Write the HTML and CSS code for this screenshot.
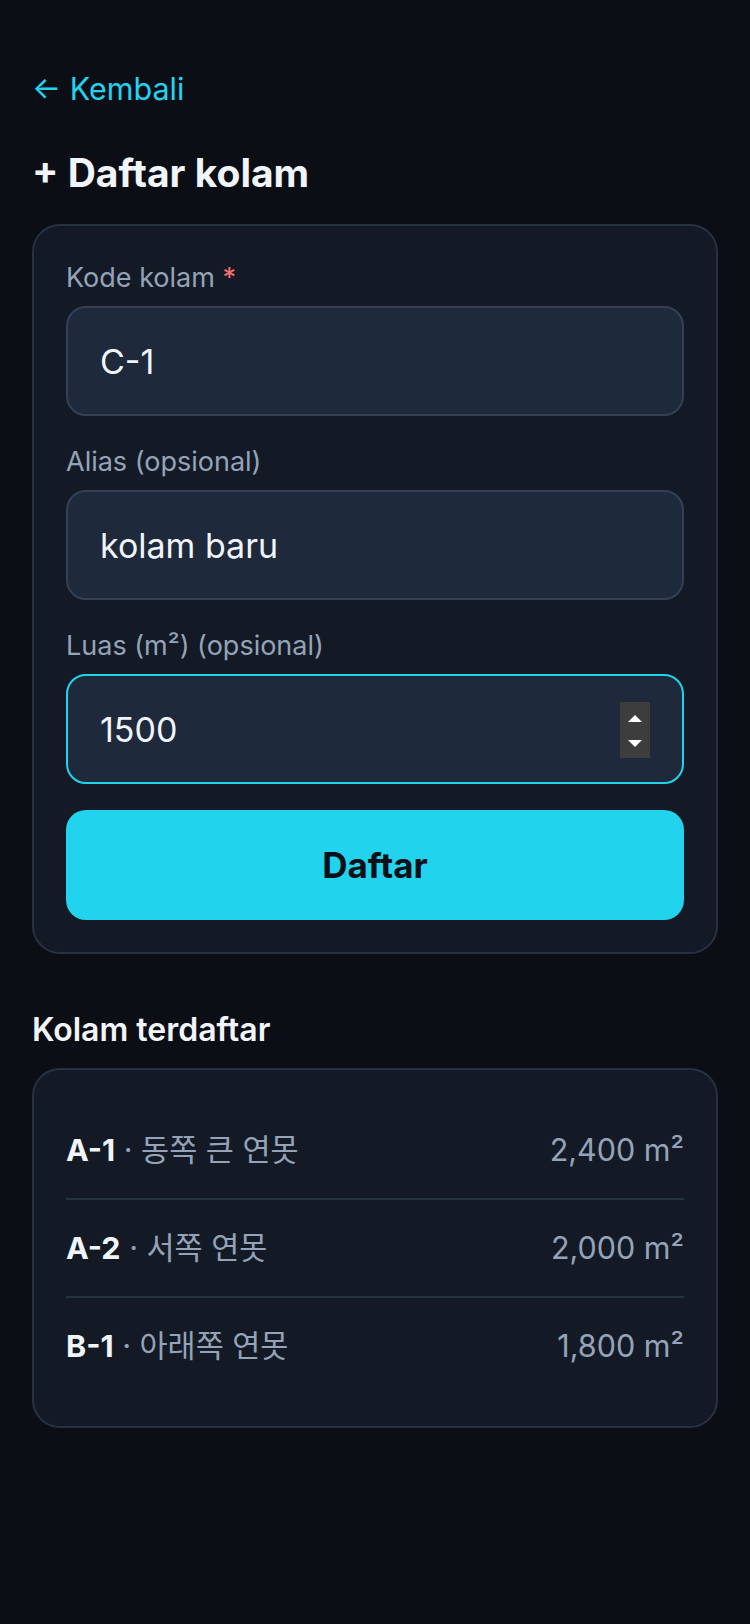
FILE: index.html
```html
<!DOCTYPE html>
<html lang="id">

<head>
    <meta charset="UTF-8">
    <meta name="viewport" content="width=device-width, initial-scale=1.0">
    <title>Daftar kolam</title>
    <link rel="stylesheet" href="styles.css">
</head>

<body>

    <main class="page">
        <a class="back-link" href="#">← Kembali</a>

        <h1 class="page-title">+ Daftar kolam</h1>

        <form class="card pond-form" onsubmit="return false;">
            <div class="field">
                <label class="field-label" for="kode">Kode kolam <span class="req">*</span></label>
                <input class="field-input" id="kode" type="text" value="C-1">
            </div>

            <div class="field">
                <label class="field-label" for="alias">Alias (opsional)</label>
                <input class="field-input" id="alias" type="text" value="kolam baru">
            </div>

            <div class="field">
                <label class="field-label" for="luas">Luas (m²) (opsional)</label>
                <div class="input-wrap">
                    <input class="field-input is-focused" id="luas" type="number" value="1500">
                    <span class="spinner">
                        <span class="tri tri-up"></span>
                        <span class="tri tri-down"></span>
                    </span>
                </div>
            </div>

            <button class="submit-btn" type="submit">Daftar</button>
        </form>

        <h2 class="section-title">Kolam terdaftar</h2>

        <ul class="card pond-list">
            <li class="pond-row">
                <span class="pond-name"><strong>A-1</strong> · 동쪽 큰 연못</span>
                <span class="pond-area">2,400 m²</span>
            </li>
            <li class="pond-row">
                <span class="pond-name"><strong>A-2</strong> · 서쪽 연못</span>
                <span class="pond-area">2,000 m²</span>
            </li>
            <li class="pond-row">
                <span class="pond-name"><strong>B-1</strong> · 아래쪽 연못</span>
                <span class="pond-area">1,800 m²</span>
            </li>
        </ul>
    </main>

</body>

</html>
```

FILE: styles.css
```css
* {
    box-sizing: border-box;
}

html,
body {
    margin: 0;
    background-color: #0b0e15;
}

body {
    font-family: Inter, "Noto Sans CJK KR", sans-serif;
    color: #f1f5f9;
}

.page {
    padding: 69px 32px 120px;
}

.back-link {
    display: block;
    font-size: 30.5px;
    line-height: 40px;
    color: #22d3ee;
    text-decoration: none;
}

.page-title {
    margin: 40px 0 27px;
    font-size: 39px;
    line-height: 48px;
    font-weight: 700;
    color: #f1f5f9;
}

.card {
    background-color: #141a25;
    border: 2px solid #263242;
    border-radius: 28px;
    padding: 32px;
}

.pond-form {
    display: flex;
    flex-direction: column;
    gap: 26px;
}

.field {
    display: flex;
    flex-direction: column;
    gap: 8px;
}

.field-label {
    font-size: 27px;
    line-height: 40px;
    color: #94a3b8;
}

.req {
    color: #f87171;
}

.input-wrap {
    position: relative;
}

.field-input {
    display: block;
    width: 100%;
    height: 110px;
    padding: 0 32px;
    font-family: inherit;
    font-size: 34px;
    color: #f1f5f9;
    background-color: #1e293b;
    border: 2px solid #334155;
    border-radius: 20px;
    outline: none;
    -moz-appearance: textfield;
}

.field-input::-webkit-outer-spin-button,
.field-input::-webkit-inner-spin-button {
    -webkit-appearance: none;
    margin: 0;
}

.field-input.is-focused {
    border-color: #22d3ee;
}

/* spin buttons drawn over the number input */
.spinner {
    position: absolute;
    top: 28px;
    right: 34px;
    width: 30px;
    height: 56px;
    background-color: #3d3d3d;
    display: flex;
    flex-direction: column;
    align-items: center;
    justify-content: space-between;
    padding: 13px 0 11px;
}

.tri {
    width: 0;
    height: 0;
    border-left: 7px solid transparent;
    border-right: 7px solid transparent;
}

.tri-up {
    border-bottom: 7px solid #ffffff;
}

.tri-down {
    border-top: 7px solid #ffffff;
}

.submit-btn {
    height: 110px;
    border: none;
    border-radius: 20px;
    background-color: #22d3ee;
    color: #0b0f17;
    font-family: inherit;
    font-size: 35px;
    font-weight: 700;
    cursor: pointer;
}

.section-title {
    margin: 56px 0 18px;
    font-size: 32px;
    line-height: 40px;
    font-weight: 600;
    color: #f1f5f9;
}

.pond-list {
    list-style: none;
    margin: 0;
}

.pond-row {
    display: flex;
    justify-content: space-between;
    align-items: center;
    padding: 28px 0;
    font-size: 30.5px;
    line-height: 40px;
    color: #94a3b8;
}

.pond-row + .pond-row {
    border-top: 2px solid #263242;
}

.pond-name strong {
    color: #f1f5f9;
    font-weight: 700;
}
```
